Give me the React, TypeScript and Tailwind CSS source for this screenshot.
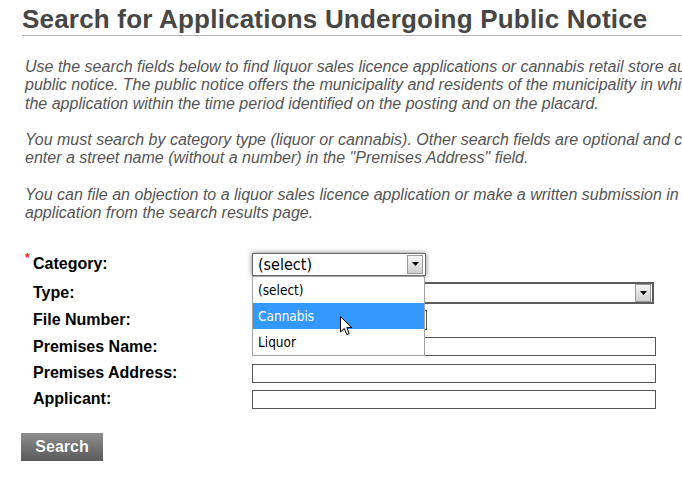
import React from "react";

function Arrow() {
  return (
    <svg width="7" height="4" viewBox="0 0 7 4">
      <path d="M0 0 L7 0 L3.5 4 Z" fill="#000" />
    </svg>
  );
}

function ArrowButton({ className }: { className: string }) {
  return (
    <div
      className={`flex items-center justify-center border border-[#9a9a9a] bg-gradient-to-b from-[#f6f6f6] to-[#cfcfcf] ${className}`}
    >
      <Arrow />
    </div>
  );
}

export default function App() {
  return (
    <div className="relative w-[682px] h-[477px] overflow-hidden bg-white font-['Liberation_Sans',Arial,sans-serif]">
      <div className="pl-[22px] pt-[4px]">
        <h1 className="text-[26px] leading-[30px] font-bold text-[#464646] tracking-[0.2px] border-b border-[#b3b3b3] pb-[1px] whitespace-nowrap">
          Search for Applications Undergoing Public Notice
        </h1>

        <div className="mt-[22px] pl-[3px] italic text-[16px] leading-[18.25px] text-[#555555] whitespace-nowrap">
          <p>
            Use the search fields below to find liquor sales licence applications or cannabis retail store au
            <br />
            public notice. The public notice offers the municipality and residents of the municipality in whic
            <br />
            the application within the time period identified on the posting and on the placard.
          </p>
          <p className="mt-[18.25px]">
            You must search by category type (liquor or cannabis). Other search fields are optional and c
            <br />
            enter a street name (without a number) in the "Premises Address" field.
          </p>
          <p className="mt-[18.25px]">
            You can file an objection to a liquor sales licence application or make a written submission in
            <br />
            application from the search results page.
          </p>
        </div>

        <div className="mt-[28px] pl-[11px] text-[16px] font-bold text-black">
          {/* Category */}
          <div className="flex items-center h-[28px]">
            <div className="relative w-[219px] leading-[18px]">
              <span className="absolute left-[-8px] top-[-6px] text-[12px] text-[#e4262c] font-bold">*</span>
              Category:
            </div>
            <div className="relative">
              <div className="flex items-center w-[174px] h-[23px] border border-[#6a6a6a] bg-white shadow-[0_0_5px_rgba(0,0,0,0.5)]">
                <span className="flex-1 pl-[5px] font-normal text-[16px] leading-[21px] font-['DejaVu_Sans_Condensed','DejaVu_Sans',sans-serif]">
                  (select)
                </span>
                <ArrowButton className="w-[16px] h-[19px] mr-[2px]" />
              </div>
              <div className="absolute left-0 top-[23px] z-10 w-[173px] border border-[#a3a3a3] bg-white font-normal text-[13.5px] font-['DejaVu_Sans_Condensed','DejaVu_Sans',sans-serif]">
                <div className="h-[26px] flex items-center pl-[5px] text-black">(select)</div>
                <div className="h-[26px] flex items-center pl-[5px] bg-[#3399ff] text-white">Cannabis</div>
                <div className="h-[26px] flex items-center pl-[5px] text-black">Liquor</div>
              </div>
            </div>
          </div>

          {/* Type */}
          <div className="flex items-center h-[29px]">
            <div className="w-[219px] leading-[18px]">Type:</div>
            <div className="flex items-center justify-end w-[402px] h-[22px] border-2 border-[#5c5c5c] bg-white pr-[1px]">
              <ArrowButton className="w-[16px] h-[18px]" />
            </div>
          </div>

          {/* File Number */}
          <div className="flex items-center h-[26px]">
            <div className="w-[219px] leading-[18px]">File Number:</div>
            <div className="w-[175px] h-[20px] border border-[#555555] bg-white" />
          </div>

          {/* Premises Name */}
          <div className="flex items-center h-[27px]">
            <div className="w-[219px] leading-[18px]">Premises Name:</div>
            <div className="w-[404px] h-[19px] border border-[#555555] bg-white" />
          </div>

          {/* Premises Address */}
          <div className="flex items-center h-[26px]">
            <div className="w-[219px] leading-[18px]">Premises Address:</div>
            <div className="w-[404px] h-[19px] border border-[#555555] bg-white" />
          </div>

          {/* Applicant */}
          <div className="flex items-center h-[26px]">
            <div className="w-[219px] leading-[18px]">Applicant:</div>
            <div className="w-[404px] h-[19px] border border-[#555555] bg-white" />
          </div>
        </div>

        <div className="mt-[21px] ml-[-1px]">
          <button className="w-[82px] h-[28px] bg-gradient-to-b from-[#8e8e8e] to-[#5b5b5b] text-white font-bold text-[16px] leading-[28px] [text-shadow:0_0_1px_rgba(0,0,0,0.4)]">
            Search
          </button>
        </div>
      </div>

      {/* mouse cursor */}
      <svg
        className="absolute left-[340px] top-[316px] z-20"
        width="13"
        height="20"
        viewBox="0 0 13 20"
      >
        <path
          d="M0.5 0.5 L0.5 16 L4.3 12.4 L6.8 18.6 L9.2 17.6 L6.8 11.6 L11.8 11.6 Z"
          fill="#ffffff"
          stroke="#000000"
          strokeWidth="1"
          strokeLinejoin="miter"
        />
      </svg>
    </div>
  );
}
